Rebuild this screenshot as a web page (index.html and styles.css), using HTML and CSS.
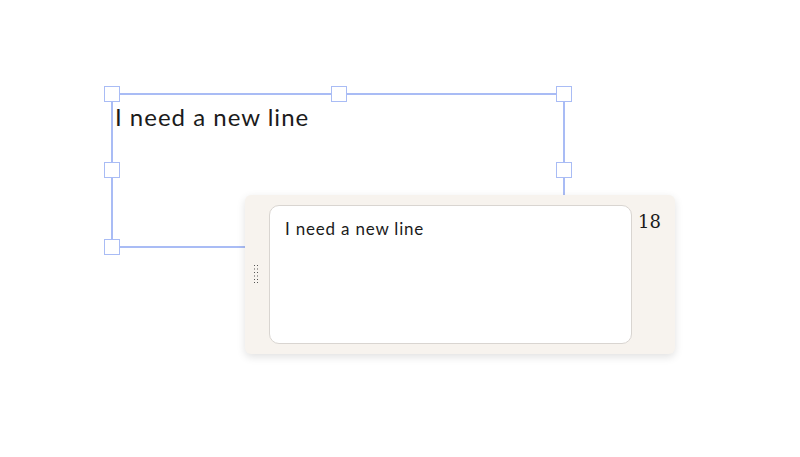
FILE: index.html
```html
<!DOCTYPE html>
<html lang="en">
<head>
  <meta charset="UTF-8">
  <title>Text editor</title>
  <link rel="stylesheet" href="styles.css">
</head>
<body>
  <div class="canvas">
    <div class="shape">
      <div class="shape-text">I need a new line</div>
      <span class="handle h-tl"></span>
      <span class="handle h-tm"></span>
      <span class="handle h-tr"></span>
      <span class="handle h-ml"></span>
      <span class="handle h-mr"></span>
      <span class="handle h-bl"></span>
    </div>

    <div class="editor">
      <div class="grip">
        <svg width="6" height="18" viewBox="0 0 6 18">
          <g fill="#555">
            <rect x="0" y="0" width="1" height="1"/><rect x="3" y="0" width="1" height="1"/>
            <rect x="0" y="3.5" width="1" height="1"/><rect x="3" y="3.5" width="1" height="1"/>
            <rect x="0" y="7" width="1" height="1"/><rect x="3" y="7" width="1" height="1"/>
            <rect x="0" y="10.5" width="1" height="1"/><rect x="3" y="10.5" width="1" height="1"/>
            <rect x="0" y="14" width="1" height="1"/><rect x="3" y="14" width="1" height="1"/>
            <rect x="0" y="17" width="1" height="1"/><rect x="3" y="17" width="1" height="1"/>
          </g>
        </svg>
      </div>
      <div class="field">I need a new line</div>
      <div class="size">18</div>
    </div>
  </div>
</body>
</html>
```

FILE: styles.css
```css
* { box-sizing: border-box; }
body { margin: 0; background: #fff; font-family: "Lato", "Noto Sans", sans-serif; }

.canvas {
  position: relative;
  width: 800px;
  height: 457px;
  overflow: hidden;
}

.shape {
  position: absolute;
  left: 111px;
  top: 93px;
  width: 454px;
  height: 155px;
  border: 2px solid #a9bcf5;
}

.shape-text {
  padding: 8px 0 0 2px;
  font-size: 24px;
  line-height: 28px;
  letter-spacing: 1px;
  color: #1b1b1b;
}

.handle {
  position: absolute;
  width: 16px;
  height: 16px;
  background: #fff;
  border: 1px solid #a9bcf5;
}
.h-tl { left: -9px; top: -9px; }
.h-tm { left: 218px; top: -9px; }
.h-tr { right: -9px; top: -9px; }
.h-ml { left: -9px; top: 67px; }
.h-mr { right: -9px; top: 67px; }
.h-bl { left: -9px; bottom: -9px; }

.editor {
  position: absolute;
  left: 245px;
  top: 195px;
  width: 430px;
  height: 159px;
  background: #f7f3ee;
  border-radius: 6px;
  box-shadow: 0 3px 8px rgba(0, 0, 0, 0.12);
  display: flex;
  align-items: flex-start;
  padding: 10px 0 10px 0;
}

.grip {
  width: 24px;
  align-self: center;
  display: flex;
  justify-content: center;
  margin-top: -1px;
}
.grip svg { display: block; }

.field {
  width: 363px;
  height: 139px;
  background: #fff;
  border: 1px solid #d9d5d1;
  border-radius: 10px;
  padding: 12px 15px;
  font-size: 17px;
  line-height: 22px;
  letter-spacing: 0.8px;
  color: #1b1b1b;
}

.size {
  margin-left: 6px;
  margin-top: 6px;
  font-family: "DejaVu Serif", serif;
  font-size: 18px;
  color: #1b1b1b;
}
```
